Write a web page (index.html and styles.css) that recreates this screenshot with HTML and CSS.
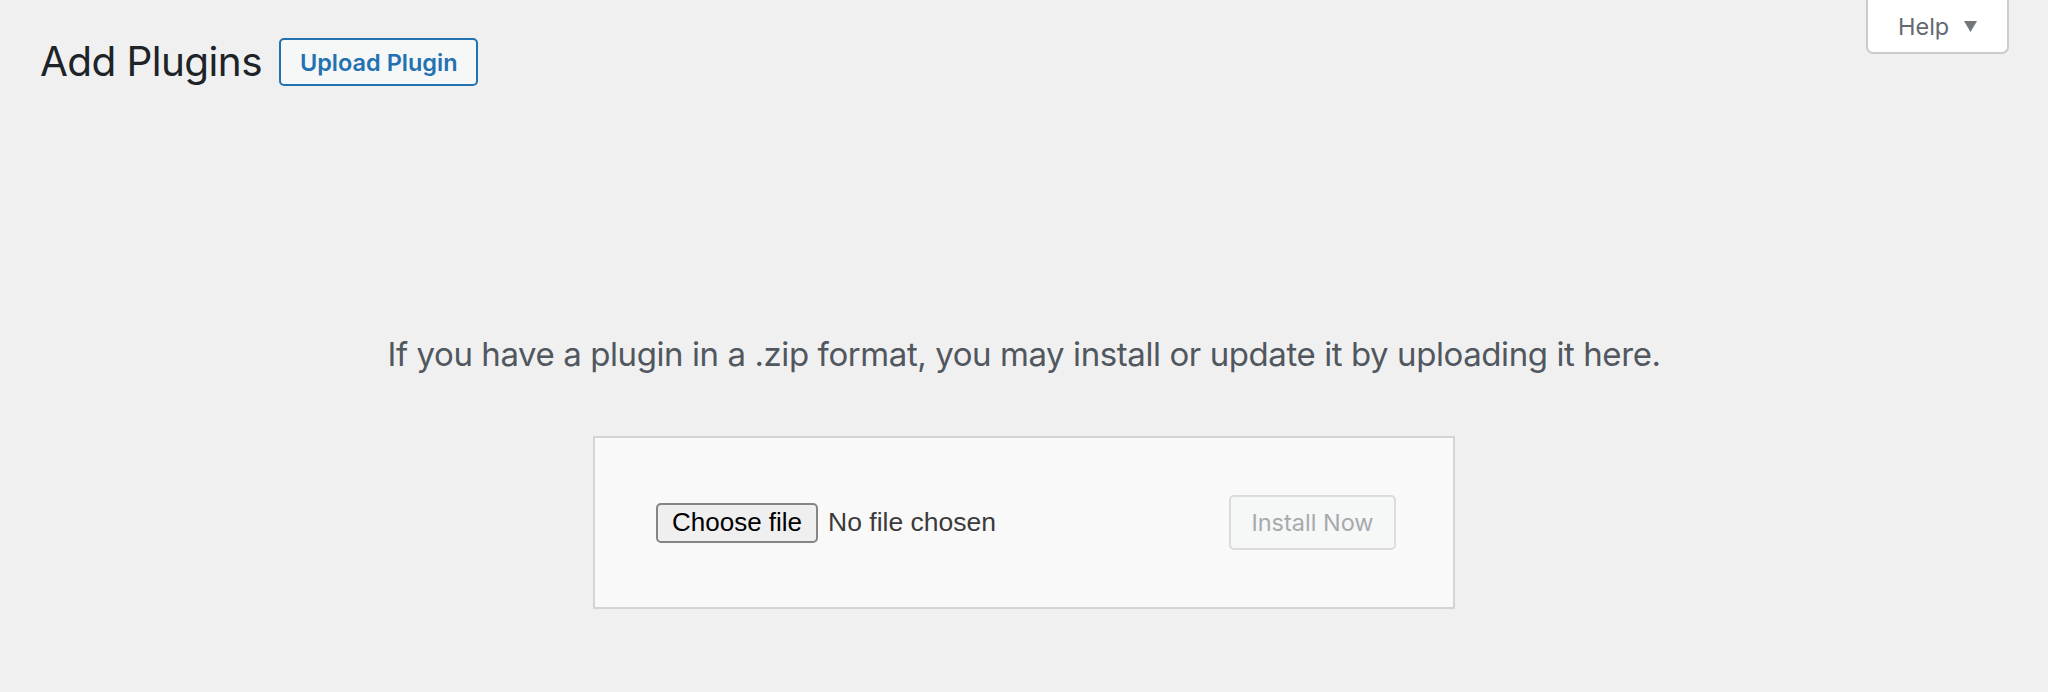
FILE: index.html
```html
<!DOCTYPE html>
<html lang="en">
<head>
<meta charset="utf-8">
<title>Add Plugins</title>
<link rel="stylesheet" href="styles.css">
</head>
<body>
<div class="screen-meta-links">
  <button class="help-tab" type="button">
    <span class="help-label">Help</span>
    <svg class="help-arrow" width="13" height="11" viewBox="0 0 13 11" aria-hidden="true"><polygon points="0,0 13,0 6.5,11" fill="#72777c"/></svg>
  </button>
</div>
<div class="wrap">
  <div class="title-row">
    <h1 class="page-title">Add Plugins</h1>
    <a class="page-title-action" href="#">Upload Plugin</a>
  </div>
  <div class="upload-plugin">
    <p class="install-help">If you have a plugin in a .zip format, you may install or update it by uploading it here.</p>
    <form class="upload-form">
      <div class="file-field">
        <span class="file-btn">Choose file</span>
        <span class="file-name">No file chosen</span>
      </div>
      <button class="install-btn" type="button" disabled>Install Now</button>
    </form>
  </div>
</div>
</body>
</html>
```
FILE: styles.css
```css
html, body {
  margin: 0;
  padding: 0;
  background: #f0f0f1;
  font-family: Inter, "Noto Sans", sans-serif;
  color: #3c434a;
}

.screen-meta-links {
  float: right;
  margin-right: 39px;
}

.help-tab {
  display: flex;
  align-items: center;
  box-sizing: border-box;
  width: 143px;
  height: 54px;
  padding: 0 0 0 30px;
  margin: 0;
  background: #fff;
  border: 2px solid #c9cbce;
  border-top: none;
  border-radius: 0 0 7px 7px;
  font-family: Inter, "Noto Sans", sans-serif;
  font-size: 23.5px;
  color: #646970;
  cursor: pointer;
}

.help-label {
  line-height: 1;
  padding-top: 2px;
}

.help-arrow {
  margin-left: 15px;
  margin-top: 1px;
}

.wrap {
  padding: 38px 40px 0 40px;
}

.title-row {
  display: flex;
  align-items: center;
  gap: 17px;
}

.page-title {
  margin: 0;
  font-size: 40.5px;
  font-weight: 400;
  letter-spacing: -0.6px;
  line-height: 48px;
  color: #1d2327;
}

.page-title-action {
  display: flex;
  align-items: center;
  box-sizing: border-box;
  height: 48px;
  padding: 0 18px 0 19px;
  border: 2px solid #2271b1;
  border-radius: 5px;
  background: #f6f7f7;
  color: #2271b1;
  font-size: 23.5px;
  font-weight: 600;
  text-decoration: none;
}

.upload-plugin {
  padding-top: 248px;
}

.install-help {
  margin: 0;
  text-align: center;
  font-size: 33px;
  letter-spacing: -0.42px;
  line-height: 40px;
  color: #50575e;
}

.upload-form {
  box-sizing: border-box;
  width: 862px;
  margin: 62px auto 0 auto;
  padding: 57px;
  display: flex;
  justify-content: space-between;
  align-items: center;
  background: #f9f9f9;
  border: 2px solid #d2d4d7;
}

.file-field {
  display: flex;
  align-items: center;
  gap: 10px;
  padding-left: 4px;
}

.file-btn {
  box-sizing: border-box;
  display: flex;
  align-items: center;
  height: 40px;
  padding: 0 14px;
  border: 2px solid #858585;
  border-radius: 5px;
  background: #efefef;
  color: #000;
  font-family: "Liberation Sans", Arial, sans-serif;
  font-size: 26px;
}

.file-name {
  font-family: "Liberation Sans", Arial, sans-serif;
  font-size: 26.5px;
  color: #3b3b3b;
}

.install-btn {
  box-sizing: border-box;
  height: 55px;
  width: 167px;
  padding: 0;
  margin: 0;
  border: 2px solid #dcdcde;
  border-radius: 5px;
  background: #f6f7f7;
  color: #a7aaad;
  font-family: Inter, "Noto Sans", sans-serif;
  font-size: 23.5px;
  font-weight: 400;
}
```
